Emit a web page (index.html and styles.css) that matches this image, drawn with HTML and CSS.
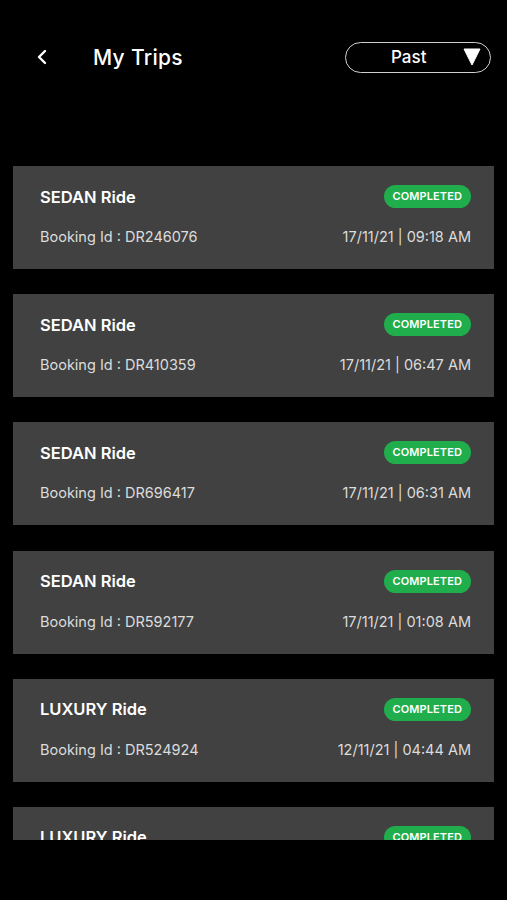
FILE: index.html
```html
<!DOCTYPE html>
<html lang="en">
<head>
  <meta charset="UTF-8">
  <title>My Trips</title>
  <link rel="stylesheet" href="styles.css">
</head>
<body>

  <header class="topbar">
    <button class="back" aria-label="Back">
      <svg width="12" height="16" viewBox="0 0 12 16"><path d="M9 2 L3 8 L9 14" fill="none" stroke="#fff" stroke-width="2.4" stroke-linecap="round" stroke-linejoin="round"/></svg>
    </button>
    <h1 class="title">My Trips</h1>
    <div class="filter">
      <span class="filter-label">Past</span>
      <svg class="caret" width="18" height="18" viewBox="0 0 18 18"><path d="M1 1 L17 1 L9 17 Z" fill="#fff" stroke="#fff" stroke-width="1" stroke-linejoin="round"/></svg>
    </div>
  </header>

  <main class="trips">
    <div class="trip">
      <div class="row">
        <span class="ride">SEDAN Ride</span>
        <span class="status">COMPLETED</span>
      </div>
      <div class="row">
        <span class="meta">Booking Id : DR246076</span>
        <span class="meta">17/11/21 | 09:18 AM</span>
      </div>
    </div>

    <div class="trip">
      <div class="row">
        <span class="ride">SEDAN Ride</span>
        <span class="status">COMPLETED</span>
      </div>
      <div class="row">
        <span class="meta">Booking Id : DR410359</span>
        <span class="meta">17/11/21 | 06:47 AM</span>
      </div>
    </div>

    <div class="trip">
      <div class="row">
        <span class="ride">SEDAN Ride</span>
        <span class="status">COMPLETED</span>
      </div>
      <div class="row">
        <span class="meta">Booking Id : DR696417</span>
        <span class="meta">17/11/21 | 06:31 AM</span>
      </div>
    </div>

    <div class="trip">
      <div class="row">
        <span class="ride">SEDAN Ride</span>
        <span class="status">COMPLETED</span>
      </div>
      <div class="row">
        <span class="meta">Booking Id : DR592177</span>
        <span class="meta">17/11/21 | 01:08 AM</span>
      </div>
    </div>

    <div class="trip">
      <div class="row">
        <span class="ride">LUXURY Ride</span>
        <span class="status">COMPLETED</span>
      </div>
      <div class="row">
        <span class="meta">Booking Id : DR524924</span>
        <span class="meta">12/11/21 | 04:44 AM</span>
      </div>
    </div>

    <div class="trip">
      <div class="row">
        <span class="ride">LUXURY Ride</span>
        <span class="status">COMPLETED</span>
      </div>
      <div class="row">
        <span class="meta">Booking Id : DR524901</span>
        <span class="meta">12/11/21 | 02:10 AM</span>
      </div>
    </div>
  </main>

</body>
</html>
```

FILE: styles.css
```css
html, body {
  margin: 0;
  height: 900px;
  background: #000;
  font-family: "Inter", "Open Sans", sans-serif;
  color: #fff;
  overflow: hidden;
}

.topbar {
  display: flex;
  align-items: center;
  height: 58px;
  padding: 28px 16px 0 36px;
}

.back {
  display: flex;
  align-items: center;
  background: none;
  border: none;
  padding: 0;
  width: 14px;
  height: 16px;
  cursor: pointer;
}

.title {
  margin: 0 0 0 43px;
  font-size: 21px;
  font-weight: 500;
  letter-spacing: 0.3px;
  flex: 1;
}

.filter {
  display: flex;
  align-items: center;
  justify-content: space-between;
  width: 146px;
  height: 31px;
  box-sizing: border-box;
  border: 1.5px solid #d0d0d0;
  border-radius: 16px;
  padding: 0 9px 0 45px;
}

.filter-label {
  font-size: 17px;
  font-weight: 500;
}

.trips {
  height: 674px;
  margin-top: 80px;
  padding: 0 13px;
  overflow: hidden;
  display: flex;
  flex-direction: column;
  gap: 25.2px;
}

.trip {
  flex: none;
  height: 103px;
  box-sizing: border-box;
  background: #414141;
  padding: 19px 23px 0 27px;
  display: flex;
  flex-direction: column;
  gap: 20px;
}

.row {
  display: flex;
  align-items: center;
  justify-content: space-between;
}

.ride {
  font-size: 16.5px;
  font-weight: 600;
}

.status {
  background: #20ad4b;
  border-radius: 12px;
  height: 23px;
  line-height: 23px;
  padding: 0 9px;
  font-size: 11px;
  font-weight: 600;
  letter-spacing: 0.1px;
}

.meta {
  font-size: 14.5px;
  color: #dcdcdc;
}
```
